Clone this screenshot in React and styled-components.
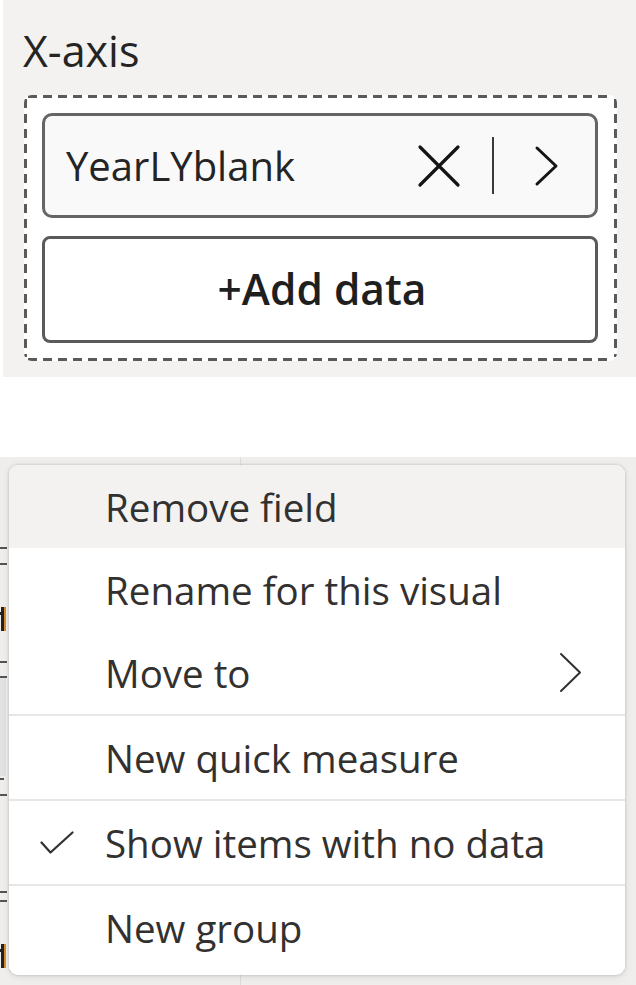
import React from "react";
import styled, { createGlobalStyle } from "styled-components";

const Global = createGlobalStyle`
  html, body { margin: 0; padding: 0; background: #ffffff; }
  body { font-family: "Open Sans", "Noto Sans", sans-serif; }
  * { box-sizing: border-box; }
`;

const Page = styled.div`
  width: 636px;
  height: 985px;
  overflow: hidden;
  display: flex;
  flex-direction: column;
`;

const Panel = styled.section`
  margin-left: 3px;
  height: 377px;
  background: #f3f2f1;
  padding: 27px 19px 16px 21px;
  display: flex;
  flex-direction: column;
`;

const Label = styled.div`
  margin-left: -1px;
  font-size: 43px;
  line-height: 48px;
  color: #252423;
  height: 48px;
  margin-bottom: 20px;
`;

const dash = "#5a5a5a";

const Well = styled.div`
  border-radius: 8px;
  background:
    repeating-linear-gradient(90deg, ${dash} 0 9px, transparent 9px 15px) 4px 0 / calc(100% - 8px) 3px no-repeat,
    repeating-linear-gradient(90deg, ${dash} 0 9px, transparent 9px 15px) 4px 100% / calc(100% - 8px) 3px no-repeat,
    repeating-linear-gradient(180deg, ${dash} 0 9px, transparent 9px 15px) 0 4px / 3px calc(100% - 8px) no-repeat,
    repeating-linear-gradient(180deg, ${dash} 0 9px, transparent 9px 15px) 100% 4px / 3px calc(100% - 8px) no-repeat,
    #ffffff;
  padding: 18px 19px 18px 18px;
  display: flex;
  flex-direction: column;
  gap: 18px;
`;

const FieldPill = styled.div`
  height: 105px;
  border: 3px solid #656565;
  border-radius: 10px;
  background: #f9f9f9;
  display: flex;
  align-items: center;
  padding: 0 36px 0 21px;
`;

const FieldName = styled.span`
  flex: 1;
  font-size: 40px;
  color: #242424;
  line-height: 1;
`;

const PillActions = styled.div`
  display: flex;
  align-items: center;
`;

const Divider = styled.span`
  width: 2px;
  height: 57px;
  background: #3a3a3a;
  margin: 0 40px 0 31px;
`;

const AddButton = styled.button`
  height: 107px;
  border: 3px solid #5a5a5a;
  border-radius: 8px;
  background: #ffffff;
  font-family: "Open Sans", "Noto Sans", sans-serif;
  font-weight: 600;
  font-size: 42.5px;
  color: #1f1f1f;
  display: flex;
  align-items: center;
  justify-content: center;
  padding: 0 0 2px 4px;
`;

const Spacer = styled.div`
  height: 80px;
  background: #ffffff;
`;

const Backdrop = styled.div`
  position: relative;
  flex: 1;
  background:
    linear-gradient(#dcdcdc, #dcdcdc) 240px 0 / 1px 100% no-repeat,
    #efeeed;
`;

const Gutter = styled.div`
  width: 9px;
  display: flex;
  flex-direction: column;
`;

const Mark = styled.span`
  display: block;
  width: ${(p) => p.$w || 7}px;
  height: ${(p) => p.$h || 2}px;
  margin-top: ${(p) => p.$top}px;
  background: ${(p) => p.$c || "#555"};
`;

const Stub = styled.span`
  display: block;
  width: 6px;
  height: 24px;
  margin-top: ${(p) => p.$top}px;
  border-right: 2px solid #d98a2b;
  background: linear-gradient(#222, #222) 0 5px / 4px 3px no-repeat,
    linear-gradient(#222, #222) 1px 0 / 3px 100% no-repeat;
`;

const Menu = styled.div`
  position: absolute;
  left: 9px;
  top: 8px;
  width: 616px;
  height: 510px;
  background: #ffffff;
  border-radius: 9px;
  box-shadow: 0 0 3px rgba(0, 0, 0, 0.2), 0 2px 8px rgba(0, 0, 0, 0.08);
  overflow: hidden;
  padding-bottom: 6px;
`;

const MenuItem = styled.div`
  height: 83px;
  display: flex;
  align-items: center;
  padding: 0 43px 0 31px;
  background: ${(p) => (p.$active ? "#f3f2f1" : "#ffffff")};
  font-size: 38.5px;
  color: #323130;
`;

const CheckSlot = styled.span`
  width: 65px;
  display: flex;
  align-items: center;
`;

const ItemText = styled.span`
  flex: 1;
  line-height: 1;
  padding-top: 2px;
  white-space: nowrap;
`;

const Separator = styled.div`
  height: 2px;
  background: #e9e7e5;
`;

const XIcon = () => (
  <svg width="44" height="44" viewBox="0 0 44 44">
    <path d="M3 3 L41 41 M41 3 L3 41" stroke="#141414" strokeWidth="3.2" strokeLinecap="round" fill="none" />
  </svg>
);

const Chevron = ({ w, h, sw, color }) => (
  <svg width={w} height={h} viewBox={`0 0 ${w} ${h}`}>
    <path
      d={`M${sw} ${sw} L${w - sw} ${h / 2} L${sw} ${h - sw}`}
      stroke={color}
      strokeWidth={sw}
      strokeLinecap="round"
      strokeLinejoin="round"
      fill="none"
    />
  </svg>
);

const Check = () => (
  <svg width="34" height="23" viewBox="0 0 34 23">
    <path d="M1.5 11.5 L10.5 21.5 L32.5 1.5" stroke="#323130" strokeWidth="2.2" strokeLinecap="round" strokeLinejoin="round" fill="none" />
  </svg>
);

const items = [
  { text: "Remove field", active: true },
  { text: "Rename for this visual" },
  { text: "Move to", sub: true, sepAfter: true },
  { text: "New quick measure", sepAfter: true },
  { text: "Show items with no data", checked: true, sepAfter: true },
  { text: "New group" },
];

export default function App() {
  return (
    <Page>
      <Global />
      <Panel>
        <Label>X-axis</Label>
        <Well>
          <FieldPill>
            <FieldName>YearLYblank</FieldName>
            <PillActions>
              <XIcon />
              <Divider />
              <Chevron w={25} h={42} sw={3} color="#141414" />
            </PillActions>
          </FieldPill>
          <AddButton>+Add data</AddButton>
        </Well>
      </Panel>
      <Spacer />
      <Backdrop>
        <Gutter>
          <Mark $top={90} />
          <Mark $top={14} />
          <Stub $top={42} />
          <Mark $top={30} />
          <Mark $top={13} />
          <Mark $top={0} $w={6} $h={98} $c="#e2e2e2" />
          <Mark $top={2} $w={4} />
          <Mark $top={14} />
          <Mark $top={95} />
          <Mark $top={7} />
          <Stub $top={42} />
        </Gutter>
        <Menu>
          {items.map((it) => (
            <React.Fragment key={it.text}>
              <MenuItem $active={it.active}>
                <CheckSlot>{it.checked ? <Check /> : null}</CheckSlot>
                <ItemText>{it.text}</ItemText>
                {it.sub ? <Chevron w={23} h={41} sw={2} color="#323130" /> : null}
              </MenuItem>
              {it.sepAfter ? <Separator /> : null}
            </React.Fragment>
          ))}
        </Menu>
      </Backdrop>
    </Page>
  );
}
